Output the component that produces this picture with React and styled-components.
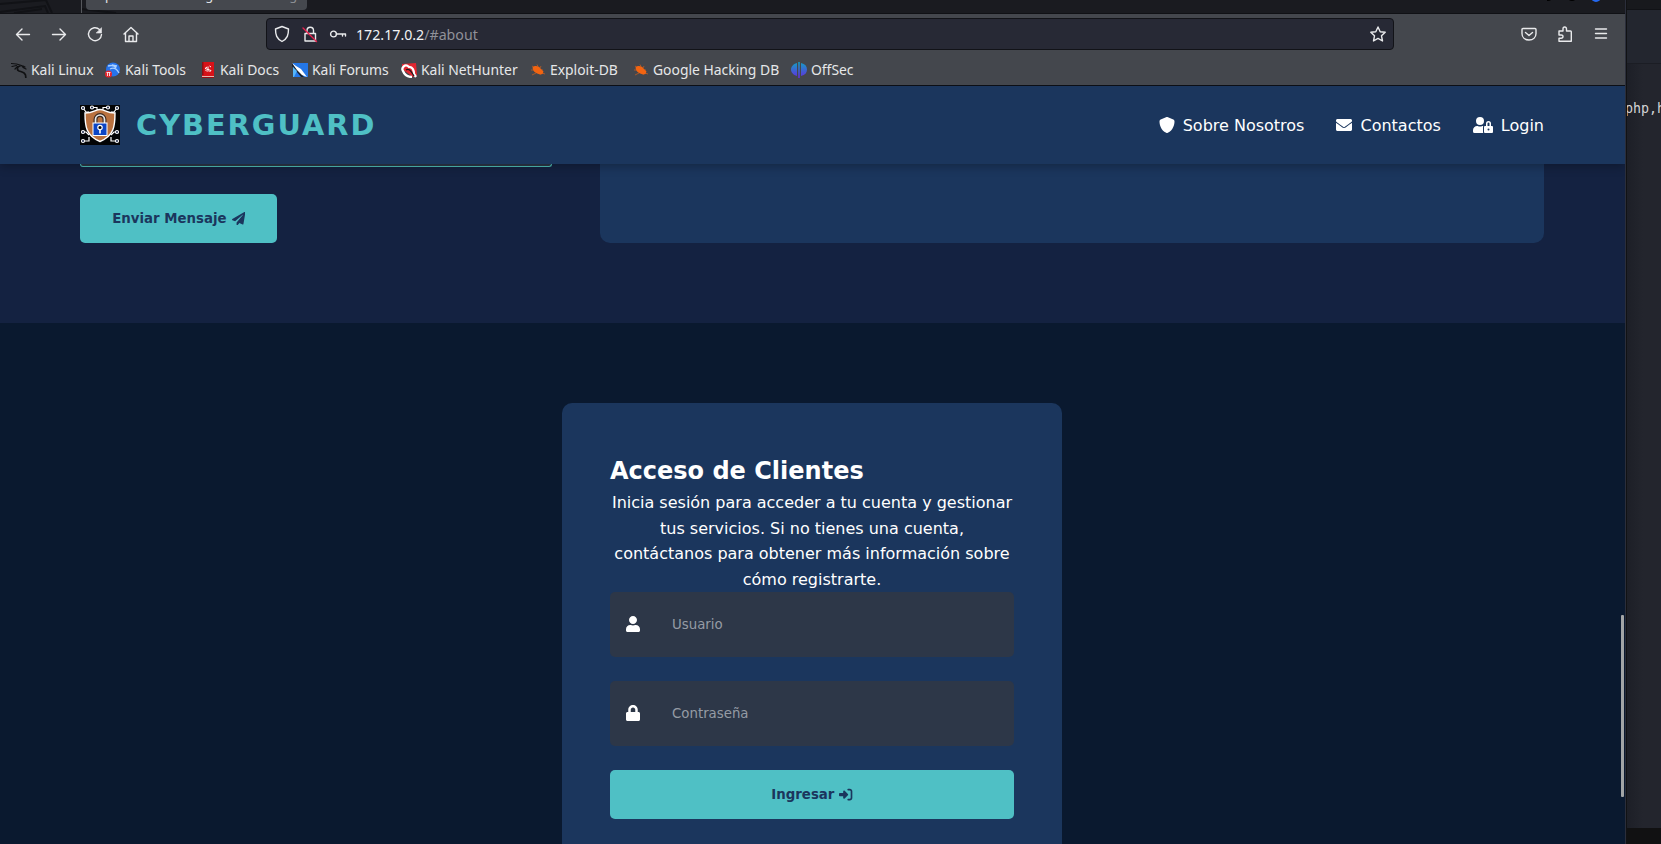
import React from "react";
import styled, { createGlobalStyle } from "styled-components";
import { FaEnvelope, FaUserLock, FaUser, FaLock, FaPaperPlane } from "react-icons/fa";
import { FaRightToBracket, FaShield } from "react-icons/fa6";

const Global = createGlobalStyle`
  * { box-sizing: border-box; }
  body { margin: 0; overflow: hidden; background: #111214; }
  h1, h2, p { margin: 0; }
`;
const Desktop = styled.div`display: flex; width: 1661px; height: 844px; overflow: hidden;`;
const Browser = styled.div`
  width: 1626px; height: 844px; flex: none; display: flex; flex-direction: column;
  overflow: hidden; border-right: 1px solid #2b2e3b; position: relative;
`;
const TabStrip = styled.div`
  height: 14px; flex: none; background: #1a1b20; border-bottom: 1px solid #101115;
  display: flex; position: relative;
`;
const Backdrop = styled.svg`width: 130px; height: 13px; flex: none; margin-right: -130px;`;
const Divider = styled.div`width: 1px; height: 13px; margin-left: 81px; background: #55575c;`;
const Tab = styled.div`
  margin-left: 4px; width: 221px; height: 10px; background: #45484e; border-radius: 0 0 4px 4px;
  overflow: hidden; display: flex; align-items: flex-end; justify-content: space-between; padding: 0 10px 0 0;
  font: 12.8px/18px "Noto Sans", sans-serif; color: #e2e3e5; white-space: pre;
  span { margin-bottom: 6px; }
  span + span { color: #8d9095; }
`;
const WindowDots = styled.svg`position: absolute; right: 8px; top: 0; width: 70px; height: 2px;`;
const Toolbar = styled.div`
  height: 37px; flex: none; background: #44474d; display: flex; align-items: center; padding: 3px 14px 0 14px;
  color: #eeeef0;
`;
const Tool = styled.svg`
  width: 18px; height: 18px; flex: none; margin-right: ${(p) => p.$gap || 0}px;
  fill: none; stroke: #e9eaec; stroke-width: 1.4; stroke-linecap: round; stroke-linejoin: round;
`;
const Address = styled.div`
  width: 1128px; height: 32px; margin: 0 126px 0 126px; flex: none; background: #272935; border: 1px solid #121318;
  border-radius: 4px; display: flex; align-items: center; padding: 0 6px;
`;
const Url = styled.div`
  flex: 1; font: 14.2px/20px "Noto Sans", sans-serif; color: #f2f2f4; white-space: nowrap; padding-top: 2px;
  span { color: #909199; }
`;
const Bookmarks = styled.div`
  height: 35px; flex: none; background: #44474d; border-bottom: 1px solid #0c0f16;
  display: flex; align-items: center; padding: 3px 0 0 11px;
`;
const Bookmark = styled.div`
  width: ${(p) => p.$w}px; flex: none; display: flex; align-items: center; gap: 4px;
  font: 13.9px/20px "Noto Sans", sans-serif; color: #e6e7e9; white-space: nowrap;
  svg { width: 16px; height: 16px; flex: none; }
`;
const Viewport = styled.main`
  flex: 1; min-height: 0; width: 1625px; background: #0a192f; overflow: hidden; position: relative;
  font-family: "DejaVu Sans", sans-serif; color: #fff; line-height: 1.6;
`;
const Header = styled.header`
  height: 78px; display: flex; align-items: center; justify-content: space-between; padding: 0 81px 0 80px;
  background: #1b365d; box-shadow: 0 2px 10px rgba(0,0,0,.3); position: relative; z-index: 1;
`;
const Brand = styled.div`display: flex; align-items: center; gap: 16px; svg { width: 40px; height: 40px; }`;
const Title = styled.h1`font-size: 28.8px; line-height: 46px; font-weight: 700; letter-spacing: 2px; color: #4fc0c5;`;
const Nav = styled.nav`display: flex; gap: 32px; padding-top: 2px;`;
const NavLink = styled.a`
  display: flex; align-items: center; gap: 8px; font-size: 16px; color: #fff; line-height: 26px;
  svg { width: ${(p) => p.$icon}px; height: 16px; margin-top: -2px; }
`;
const Contact = styled.section`
  height: 159px; background: #142241; padding: 0 81px 80px 80px; display: grid; grid-template-columns: 472px 944px;
  gap: 48px;
`;
const ContactForm = styled.div`display: flex; flex-direction: column; align-items: flex-start;`;
const MessageBox = styled.div`
  width: 472px; height: 3px; flex: none; background: #2d3748; border: 1px solid #4fc0b9; border-top: 0;
  border-radius: 0 0 5px 5px; margin-bottom: 27px;
`;
const Button = styled.button`
  height: 49px; width: ${(p) => p.$w}; border: 0; border-radius: 5px; padding: 0; background: #4fc0c5; color: #1b365d;
  font: 700 13.333px/16px "DejaVu Sans", sans-serif; display: flex; align-items: center; justify-content: center; gap: 5px;
`;
const MapPanel = styled.div`height: 79px; background: #1b365d; border-radius: 0 0 10px 10px;`;
const Access = styled.section`padding-top: 80px; display: flex; justify-content: center;`;
const Card = styled.div`
  width: 500px; height: 520px; margin-right: 1px; padding: 49px 48px 48px; background: #1b365d; border-radius: 10px;
  display: flex; flex-direction: column;
`;
const CardTitle = styled.h2`font-size: 24px; line-height: 38px; font-weight: 700;`;
const Intro = styled.p`
  font-size: 16px; line-height: 25.6px; text-align: center; height: 102px; flex: none;
`;
const Field = styled.label`
  height: 65px; flex: none; margin-bottom: 24px; padding: 0 16px; display: flex; align-items: center; gap: 32px;
  background: #2d3748; border-radius: 5px;
  svg { width: 14px; height: 16px; margin-top: -1px; }
`;
const Input = styled.input`
  flex: 1; border: 0; padding: 0; background: transparent; outline: 0; color: #fff;
  font: 13.333px "DejaVu Sans", sans-serif;
  &::placeholder { color: #959ba4; opacity: 1; }
`;
const ScrollThumb = styled.div`
  position: absolute; right: 1px; top: 529px; width: 3px; height: 182px; background: #a3a5a6; border-radius: 1px;
`;
const Terminal = styled.div`
  flex: 1; display: flex; flex-direction: column; background: #23252d; margin-left: 1px; overflow: hidden;
`;
const TermTop = styled.div`height: 10px; background: #18191d; border-bottom: 1px solid #111216;`;
const TermMenu = styled.div`height: 54px; background: #23262f; border-bottom: 1px solid #1b1d24;`;
const TermBody = styled.div`
  flex: 1; padding-top: 35px; background: linear-gradient(90deg, #1d1f27, #23252d 16px);
  font: 13.333px/20px "DejaVu Sans Mono", monospace; color: #d2d3d5; white-space: nowrap;
  span { margin-left: -2px; }
`;
const TermBottom = styled.div`height: 16px; background: #111112;`;

const Logo = () => (
  <svg viewBox="0 0 40 40">
    <rect width="40" height="40" fill="#030405" />
    <g fill="none" stroke="#fff" strokeWidth="1.2">
      <path d="M3 3l3 4h3M12 2.500h5v2M28 2.500h-5v2M37 3l-3 4h-3M3 27h3l3 3M9 32v4H4M37 27h-3l-3 3M31 32v4h6" />
    </g>
    <g fill="#0a1538" stroke="#fff" strokeWidth="1.2">
      {[[3, 3], [12, 2.5], [28, 2.5], [37, 3], [3, 27], [37, 27], [3, 36], [37, 36]].map(([x, y]) => (
        <circle key={x + "-" + y} cx={x} cy={y} r="1.5" />
      ))}
    </g>
    <path d="M20 4.500C15 4.500 14 8 5 8c0 13 1 23 15 28.500C34 31 35 21 35 8 26 8 25 4.500 20 4.500Z" fill="#b9713f" stroke="#fff" strokeWidth="1.400" />
    <path d="M15.500 18v-3.500a4.500 4.500 0 0 1 9 0V18" fill="none" stroke="#3d2b22" strokeWidth="4" />
    <path d="M15.500 18v-3.500a4.500 4.500 0 0 1 9 0V18" fill="none" stroke="#e8e8e8" strokeWidth="1.700" />
    <rect x="13" y="18" width="14" height="12.500" fill="#0c45c5" stroke="#fff" />
    <circle cx="20" cy="22.500" r="2.200" fill="#05070c" stroke="#fff" strokeWidth="1.200" />
    <path d="M20 25v3.500" stroke="#fff" strokeWidth="1.600" />
  </svg>
);
const Dragon = ({ c }) => (
  <g fill="none" stroke={c} strokeWidth="1.200" strokeLinecap="round" strokeLinejoin="round">
    <path d="M.500 1.500l5 .5 5 1.500 2 2M1 4.500l4.500-1M4 7l2.500-2.500M12 5.500l3 1.500M14 5l-2-1" />
    <path d="M9 4C6 4.500 5.500 8 8 9c3 1 5.500 1 6.500 4l.3 2.500" strokeWidth="1.700" />
  </g>
);
const Bug = () => (
  <svg viewBox="0 0 16 16">
    <path d="M2 4l3 2M7 2.500l1 2M11 4l-1 2M1 8h4M2 13l4-2M10 13l1-2M15 12l-3-1M13 8l-2 0" stroke="#b05a28" strokeWidth=".9" />
    <path d="M2.500 5.500C5 3 9 4 11 7l2.500 2.500-1 2.500C9 13 3 11 2.500 5.500Z" fill="#f26411" />
  </svg>
);
const marks = [
  ["Kali Linux", 94, <svg viewBox="0 0 16 16"><Dragon c="#101113" /></svg>],
  ["Kali Tools", 95, <svg viewBox="0 0 16 16"><circle cx="8" cy="7.500" r="7" fill="#2673ea" /><path d="M3 4c4-1 7 0 8 2M5 7c4-2 7 0 9 4M7 3l5 1" stroke="#a9cfff" fill="none" strokeWidth="1.300" /><circle cx="3.500" cy="12" r="3.500" fill="#e3262d" /><path d="M1.500 10.500h4M2.500 10.500V14M4.500 10.500V14" stroke="#fff" strokeWidth=".8" /></svg>],
  ["Kali Docs", 92, <svg viewBox="0 0 16 16"><path d="M2 0h12v16H2z" fill="#d61218" /><path d="M2 14h12v1H2z" fill="#e9b5b0" /><path d="M2 15h12v1H2z" fill="#951015" /><path d="M2 0h1.500v13H2z" fill="#8c0f13" /><path d="M7 5L5 6.500l6 2-1.500 1.500M9.500 4l1.500 1M5.500 8l1.500 1.500M8 4.500v5" fill="none" stroke="#fff" /></svg>],
  ["Kali Forums", 109, <svg viewBox="0 0 16 16"><path d="M1 1h15v14H1z" fill="#2477e8" /><path d="M0 1l12 14H9L0 4z" fill="#17202c" /><path d="M1 5l4 4-3 6H1z" fill="#55b6fa" /><path d="M0 1l4 3 5 3 3 4 3 4-5-2-5-5z" fill="#fff" /></svg>],
  ["Kali NetHunter", 129, <svg viewBox="0 0 16 16"><path d="M1 2L15 1l1 12-4 2L1 7z" fill="#e02630" /><path d="M8 5C4 1 0 6 2 9c2 5 5 6 9 6M7 5c5-1 6 4 6 7l2 3" stroke="#fff" strokeWidth="2.300" fill="none" /><path d="M5 8c3-2 5 1 8 6" fill="none" stroke="#1a1a1d" strokeWidth="1.300" /></svg>],
  ["Exploit-DB", 103, <Bug />],
  ["Google Hacking DB", 158, <Bug />],
  ["OffSec", 80, <svg viewBox="0 0 16 16"><defs><linearGradient id="off" x1="0" y1="0" x2="0" y2="1"><stop stopColor="#13a0c4" /><stop offset="1" stopColor="#642be0" /></linearGradient></defs><path d="M6 1v13C2 13 0 10 0 7.500S2 2 6 1ZM7.200 0h1.600v16H7.200zM10 1c4 1 6 3 6 6.500S14 13 10 14z" fill="url(#off)" /></svg>],
];

export default function App() {
  return (
    <Desktop>
      <Global />
      <Browser>
        <TabStrip>
          <Backdrop viewBox="0 0 130 13"><path d="M0 4l46-4 6 13M0 12l45-6 3 7M14 13l28-4M81 9l35 4" fill="none" stroke="#111216" strokeWidth="2" /></Backdrop>
          <Divider />
          <Tab><span>Empresa de Ciberseguridad</span><span>g</span></Tab>
          <WindowDots viewBox="0 0 70 2"><circle cx="1" cy="-3" r="4" fill="#000" /><circle cx="25" cy="-3" r="4" fill="#000" /><circle cx="49" cy="-3" r="5" fill="#2468ef" /></WindowDots>
        </TabStrip>
        <Toolbar>
          <Tool $gap={18} viewBox="0 0 18 18"><path d="M15.500 9.500H2.500M8 4L2.500 9.500 8 15" /></Tool>
          <Tool $gap={18} viewBox="0 0 18 18"><path d="M2.500 9.500h13M10 4l5.500 5.500L10 15" /></Tool>
          <Tool $gap={18} viewBox="0 0 18 18"><path d="M13.500 4.500A6.500 6.500 0 1 0 15.500 9.500" /><path d="M15.500 3v5h-5z" fill="#e9eaec" strokeWidth=".6" /></Tool>
          <Tool viewBox="0 0 18 18"><path d="M2 9l7-6.500L16 9M3.500 8v8.500h11V8M7 16.500v-5.500h4v5.500" /></Tool>
          <Address>
            <Tool $gap={10} viewBox="0 0 18 18"><path d="M9 1.500L15.500 4c0 6-1 9.500-6.500 12.500C3.500 13.500 2.500 10 2.500 4Z" /></Tool>
            <Tool $gap={10} viewBox="0 0 18 18"><path d="M4 8.500h10.500v7.500H4zM6 8V5.500a3.200 3.200 0 0 1 6.500 0V8" /><path d="M2 3l13.500 13.500" stroke="#e9204d" /></Tool>
            <Tool $gap={9} viewBox="0 0 18 18"><circle cx="4.500" cy="9" r="2.900" /><path d="M7.500 9h9v2M13.500 9v2" /></Tool>
            <Url>172.17.0.2<span>/#about</span></Url>
            <Tool viewBox="0 0 18 18"><path d="M9 2l2.200 4.700 5 .6-3.700 3.500 1 5.200L9 13.400 4.500 16l1-5.200L1.800 7.300l5-.6z" /></Tool>
          </Address>
          <Tool $gap={18} viewBox="0 0 18 18"><path d="M3 3.500h12q1 0 1 1v4c0 4-3 6.500-7 6.500S2 12.500 2 8.500v-4q0-1 1-1ZM5.500 7.500L9 10.500l3.500-3" /></Tool>
          <Tool $gap={18} viewBox="0 0 18 18"><path d="M3 6h4V4q0-2 1.700-2T10.500 4v2h4q.8 0 .8.800v9.500H3v-3h2q2 0 2-1.700T5 10H3z" /></Tool>
          <Tool viewBox="0 0 18 18"><path d="M3.500 4h11M3.500 8.500h11M3.500 13h11" /></Tool>
        </Toolbar>
        <Bookmarks>{marks.map(([t, w, icon]) => <Bookmark key={t} $w={w}>{icon}<span>{t}</span></Bookmark>)}</Bookmarks>
        <Viewport>
          <Header>
            <Brand><Logo /><Title>CYBERGUARD</Title></Brand>
            <Nav>
              <NavLink $icon={16}><FaShield />Sobre Nosotros</NavLink>
              <NavLink $icon={16}><FaEnvelope />Contactos</NavLink>
              <NavLink $icon={20}><FaUserLock />Login</NavLink>
            </Nav>
          </Header>
          <Contact>
            <ContactForm>
              <MessageBox />
              <Button $w="197px">Enviar Mensaje <FaPaperPlane size={13.333} /></Button>
            </ContactForm>
            <MapPanel />
          </Contact>
          <Access>
            <Card>
              <CardTitle>Acceso de Clientes</CardTitle>
              <Intro>Inicia sesión para acceder a tu cuenta y gestionar tus servicios. Si no tienes una cuenta, contáctanos para obtener más información sobre cómo registrarte.</Intro>
              <Field><FaUser /><Input placeholder="Usuario" /></Field>
              <Field><FaLock /><Input type="password" placeholder="Contraseña" /></Field>
              <Button $w="100%">Ingresar <FaRightToBracket size={13.333} /></Button>
            </Card>
          </Access>
          <ScrollThumb />
        </Viewport>
      </Browser>
      <Terminal>
        <TermTop /><TermMenu />
        <TermBody><span>php,h</span></TermBody>
        <TermBottom />
      </Terminal>
    </Desktop>
  );
}
